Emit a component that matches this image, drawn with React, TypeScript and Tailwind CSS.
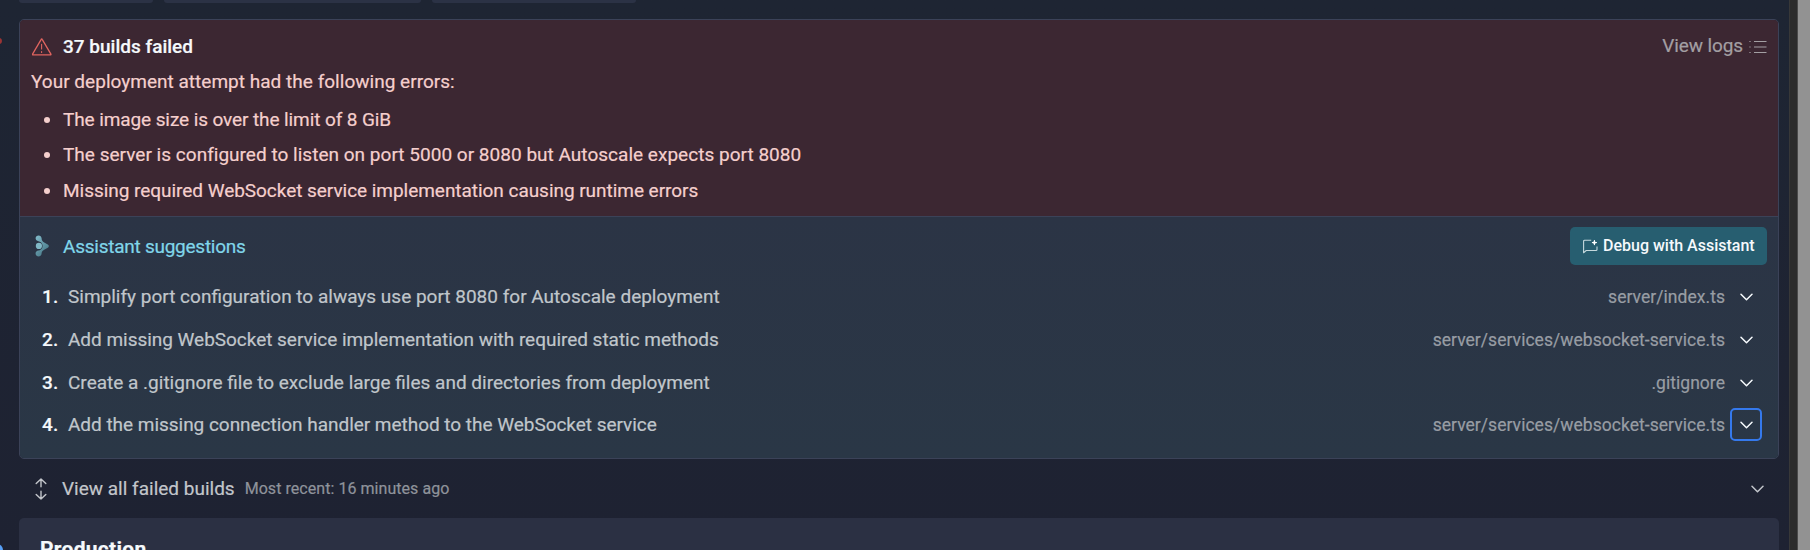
import type { ReactNode } from 'react';

const errors: { text: string; row: string }[] = [
  { text: 'The image size is over the limit of 8 GiB', row: 'h-[35px] tracking-[-0.1px]' },
  { text: 'The server is configured to listen on port 5000 or 8080 but Autoscale expects port 8080', row: 'h-[35px] tracking-[0.02px]' },
  { text: 'Missing required WebSocket service implementation causing runtime errors', row: 'h-[37px] tracking-[-0.04px]' },
];

const suggestions: { text: string; file: string; row: string; focused?: boolean }[] = [
  { text: 'Simplify port configuration to always use port 8080 for Autoscale deployment', file: 'server/index.ts', row: 'h-[43px]' },
  { text: 'Add missing WebSocket service implementation with required static methods', file: 'server/services/websocket-service.ts', row: 'h-[43px] tracking-[-0.03px]' },
  { text: 'Create a .gitignore file to exclude large files and directories from deployment', file: '.gitignore', row: 'h-[43px]' },
  { text: 'Add the missing connection handler method to the WebSocket service', file: 'server/services/websocket-service.ts', row: 'h-[41px] tracking-[-0.03px]', focused: true },
];

function Chevron({ className }: { className: string }) {
  return (
    <svg width="13" height="8" viewBox="0 0 13 8" fill="none" stroke="currentColor" strokeWidth="1.5" strokeLinecap="round" strokeLinejoin="round" className={className}>
      <path d="M1 1.200 6.500 6.700 12 1.200" />
    </svg>
  );
}

function WarningIcon() {
  return (
    <svg width="20" height="18" viewBox="0 0 20 18" fill="none" stroke="#e0645f" strokeWidth="1.3" strokeLinejoin="round" strokeLinecap="round">
      <path d="M9.2 1.3a.55.55 0 0 1 1 0l8.7 14.9a.5.5 0 0 1-.45.75H1a.5.5 0 0 1-.45-.75Z" />
      <path d="M9.6 6.3v4.6M9.6 13.6v.8" strokeWidth="1.1" />
    </svg>
  );
}

function AssistantLogo() {
  return (
    <svg width="15" height="22" viewBox="0 0 15 22">
      <defs>
        <linearGradient id="logo" x1="0" y1="0" x2="0.7" y2="1">
          <stop offset="0" stopColor="#83bccb" />
          <stop offset="1" stopColor="#467786" />
        </linearGradient>
      </defs>
      <path fill="url(#logo)" d="M.6 3.300C.6 1.600 2 .4 3.600.4s2.900 1.200 3 2.900c.1 2 .9 3.400 2.600 4.100l3.600 2c1.400.8 1.400 2.600 0 3.400l-3.600 2c-1.700.7-2.500 2.100-2.600 3.800-.1 1.700-1.400 2.900-3 2.900s-3-1.200-3-2.900 1.200-2.900 2.900-3c1.700-.2 4.100-1.900 4.100-4.700S5.200 6.400 3.500 6.200C1.800 6 .6 4.900.6 3.300Z" />
      <circle cx="3.900" cy="10.900" r="3.100" fill="#80b8c6" />
    </svg>
  );
}

function ListIcon() {
  return (
    <svg width="18" height="14" viewBox="0 0 18 14" stroke="currentColor" strokeWidth="1.2" className="text-[#a39fa3]">
      <path d="M5 1.500h12.500M5 7h12.500M5 12.500h12.500" />
      <path d="M.4 1.500h1.200M.4 7h1.200M.4 12.500h1.200" />
    </svg>
  );
}

function ChatSparkIcon() {
  return (
    <svg width="15" height="15" viewBox="0 0 15 15" fill="none" stroke="#c5d9dd" strokeWidth="1.100" strokeLinejoin="round">
      <path d="M8.200 1.200H1.600a1 1 0 0 0-1 1v11.600l2.600-2.300h9.800a1 1 0 0 0 1-1V7.600" />
      <path d="M11.400.8l.8 2 2 .8-2 .8-.8 2-.8-2-2-.8 2-.8Z" fill="#fff" stroke="none" />
      <path d="M11.400 1.200v4.800M9 3.600h4.800" stroke="#fff" strokeWidth="1" />
    </svg>
  );
}

function ExpandIcon() {
  return (
    <svg width="12" height="22" viewBox="0 0 12 22" fill="none" stroke="#c3c6cb" strokeWidth="1.400" strokeLinecap="round" strokeLinejoin="round">
      <path d="M1.200 5.600 6 .9l4.800 4.700M6 1v7.800M1.200 16.400 6 21.100l4.800-4.700M6 21v-7.800" />
    </svg>
  );
}

function Tab({ className }: { className: string }): ReactNode {
  return <div className={`h-[3px] rounded-b bg-[#2b3245] ${className}`} />;
}

export default function App() {
  return (
    <div className="relative flex h-[550px] w-full overflow-hidden bg-linear-to-b from-[#1e2533] to-[#1e2232] font-['Roboto',sans-serif] text-[19px] leading-6 whitespace-nowrap [-webkit-text-stroke:0.2px]">
      <span className="absolute top-[38px] -left-1 size-1.5 rounded-full bg-[#9b3434]" />
      <span className="absolute top-[544px] -left-[9px] size-3 rounded-full bg-[#57a0f8]" />

      <main className="flex min-w-0 flex-1 flex-col pr-2.5 pl-[19px]">
        <div className="flex h-[19px] shrink-0 gap-[11px]">
          <Tab className="w-[134px]" />
          <Tab className="w-[257px]" />
          <Tab className="w-[204px]" />
        </div>

        <section className="h-[440px] shrink-0 overflow-hidden rounded-[5px] border border-[#3b4258]">
          <div className="h-[196px] bg-[#3c2732] pt-3 pr-[11px] pl-[11px] text-[#f5cfcd]">
            <div className="flex h-[29px] items-center">
              <div className="flex w-8 pl-px">
                <WarningIcon />
              </div>
              <h2 className="font-medium text-[#f5f9fc]">37 builds failed</h2>
              <button className="ml-auto flex items-center gap-1.5 text-[#a39fa3]">
                <span className="relative -top-px tracking-[-0.1px]">View logs</span>
                <ListIcon />
              </button>
            </div>
            <p className="flex h-[41px] items-center tracking-[0.02px]">Your deployment attempt had the following errors:</p>
            <ul>
              {errors.map((e) => (
                <li key={e.text} className={`flex items-center ${e.row}`}>
                  <span className="mr-[13px] ml-[13px] size-1.5 shrink-0 rounded-full bg-[#f5cfcd]" />
                  {e.text}
                </li>
              ))}
            </ul>
          </div>

          <div className="h-[242px] border-t border-[#3b4258] bg-linear-to-b from-[#2b3445] to-[#2a3746] pt-2.5">
            <div className="flex h-[38px] items-center pr-[11px] pl-[15px]">
              <div className="w-7 pb-px">
                <AssistantLogo />
              </div>
              <h3 className="pt-px tracking-[-0.25px] text-[#80d6ea]">Assistant suggestions</h3>
              <button className="ml-auto flex h-[38px] w-[197px] items-center gap-[5px] rounded-[5px] bg-[#275e70] pl-[13px] text-base font-medium text-[#f5f9fc] [-webkit-text-stroke:0]">
                <ChatSparkIcon />
                Debug with Assistant
              </button>
            </div>
            <ol className="pt-2.5 pr-4 pl-[22px]">
              {suggestions.map((s, i) => (
                <li key={s.text} className={`flex items-center text-[#c0c6cb] ${s.row}`}>
                  <span className="w-[26px] font-medium tracking-[0.3px] text-[#f5f9fc]">{i + 1}.</span>
                  <span>{s.text}</span>
                  <span className="ml-auto pt-px text-[17.5px] tracking-[0.04px] text-[#989da4]">{s.file}</span>
                  <button
                    className={`ml-[5px] flex h-[33px] w-8 items-center justify-center rounded-[5px] border-2 ${s.focused ? 'border-[#3579ec]' : 'border-transparent'}`}
                  >
                    <Chevron className="text-[#f5f9fc]" />
                  </button>
                </li>
              ))}
            </ol>
          </div>
        </section>

        <div className="flex h-[59px] shrink-0 items-center pr-[15px] pl-4">
          <ExpandIcon />
          <span className="ml-[15px] text-[#c3c6cb]">View all failed builds</span>
          <span className="ml-2.5 text-base tracking-[0.05px] text-[#8f939b]">Most recent: 16 minutes ago</span>
          <Chevron className="ml-auto text-[#c3c6cb]" />
        </div>

        <section className="h-20 shrink-0 rounded-[5px] bg-[#2b3043] pt-[19px] pl-[21px]">
          <h2 className="text-[21px] leading-6 font-bold tracking-[0.3px] text-[#f5f9fc]">Production</h2>
        </section>
      </main>

      <div className="w-[9px] shrink-0 border-x border-[#4a4a4a] border-l-[#383838] bg-[#2b2b2b]" />
      <div className="w-3 shrink-0 bg-[#929292]" />
    </div>
  );
}
